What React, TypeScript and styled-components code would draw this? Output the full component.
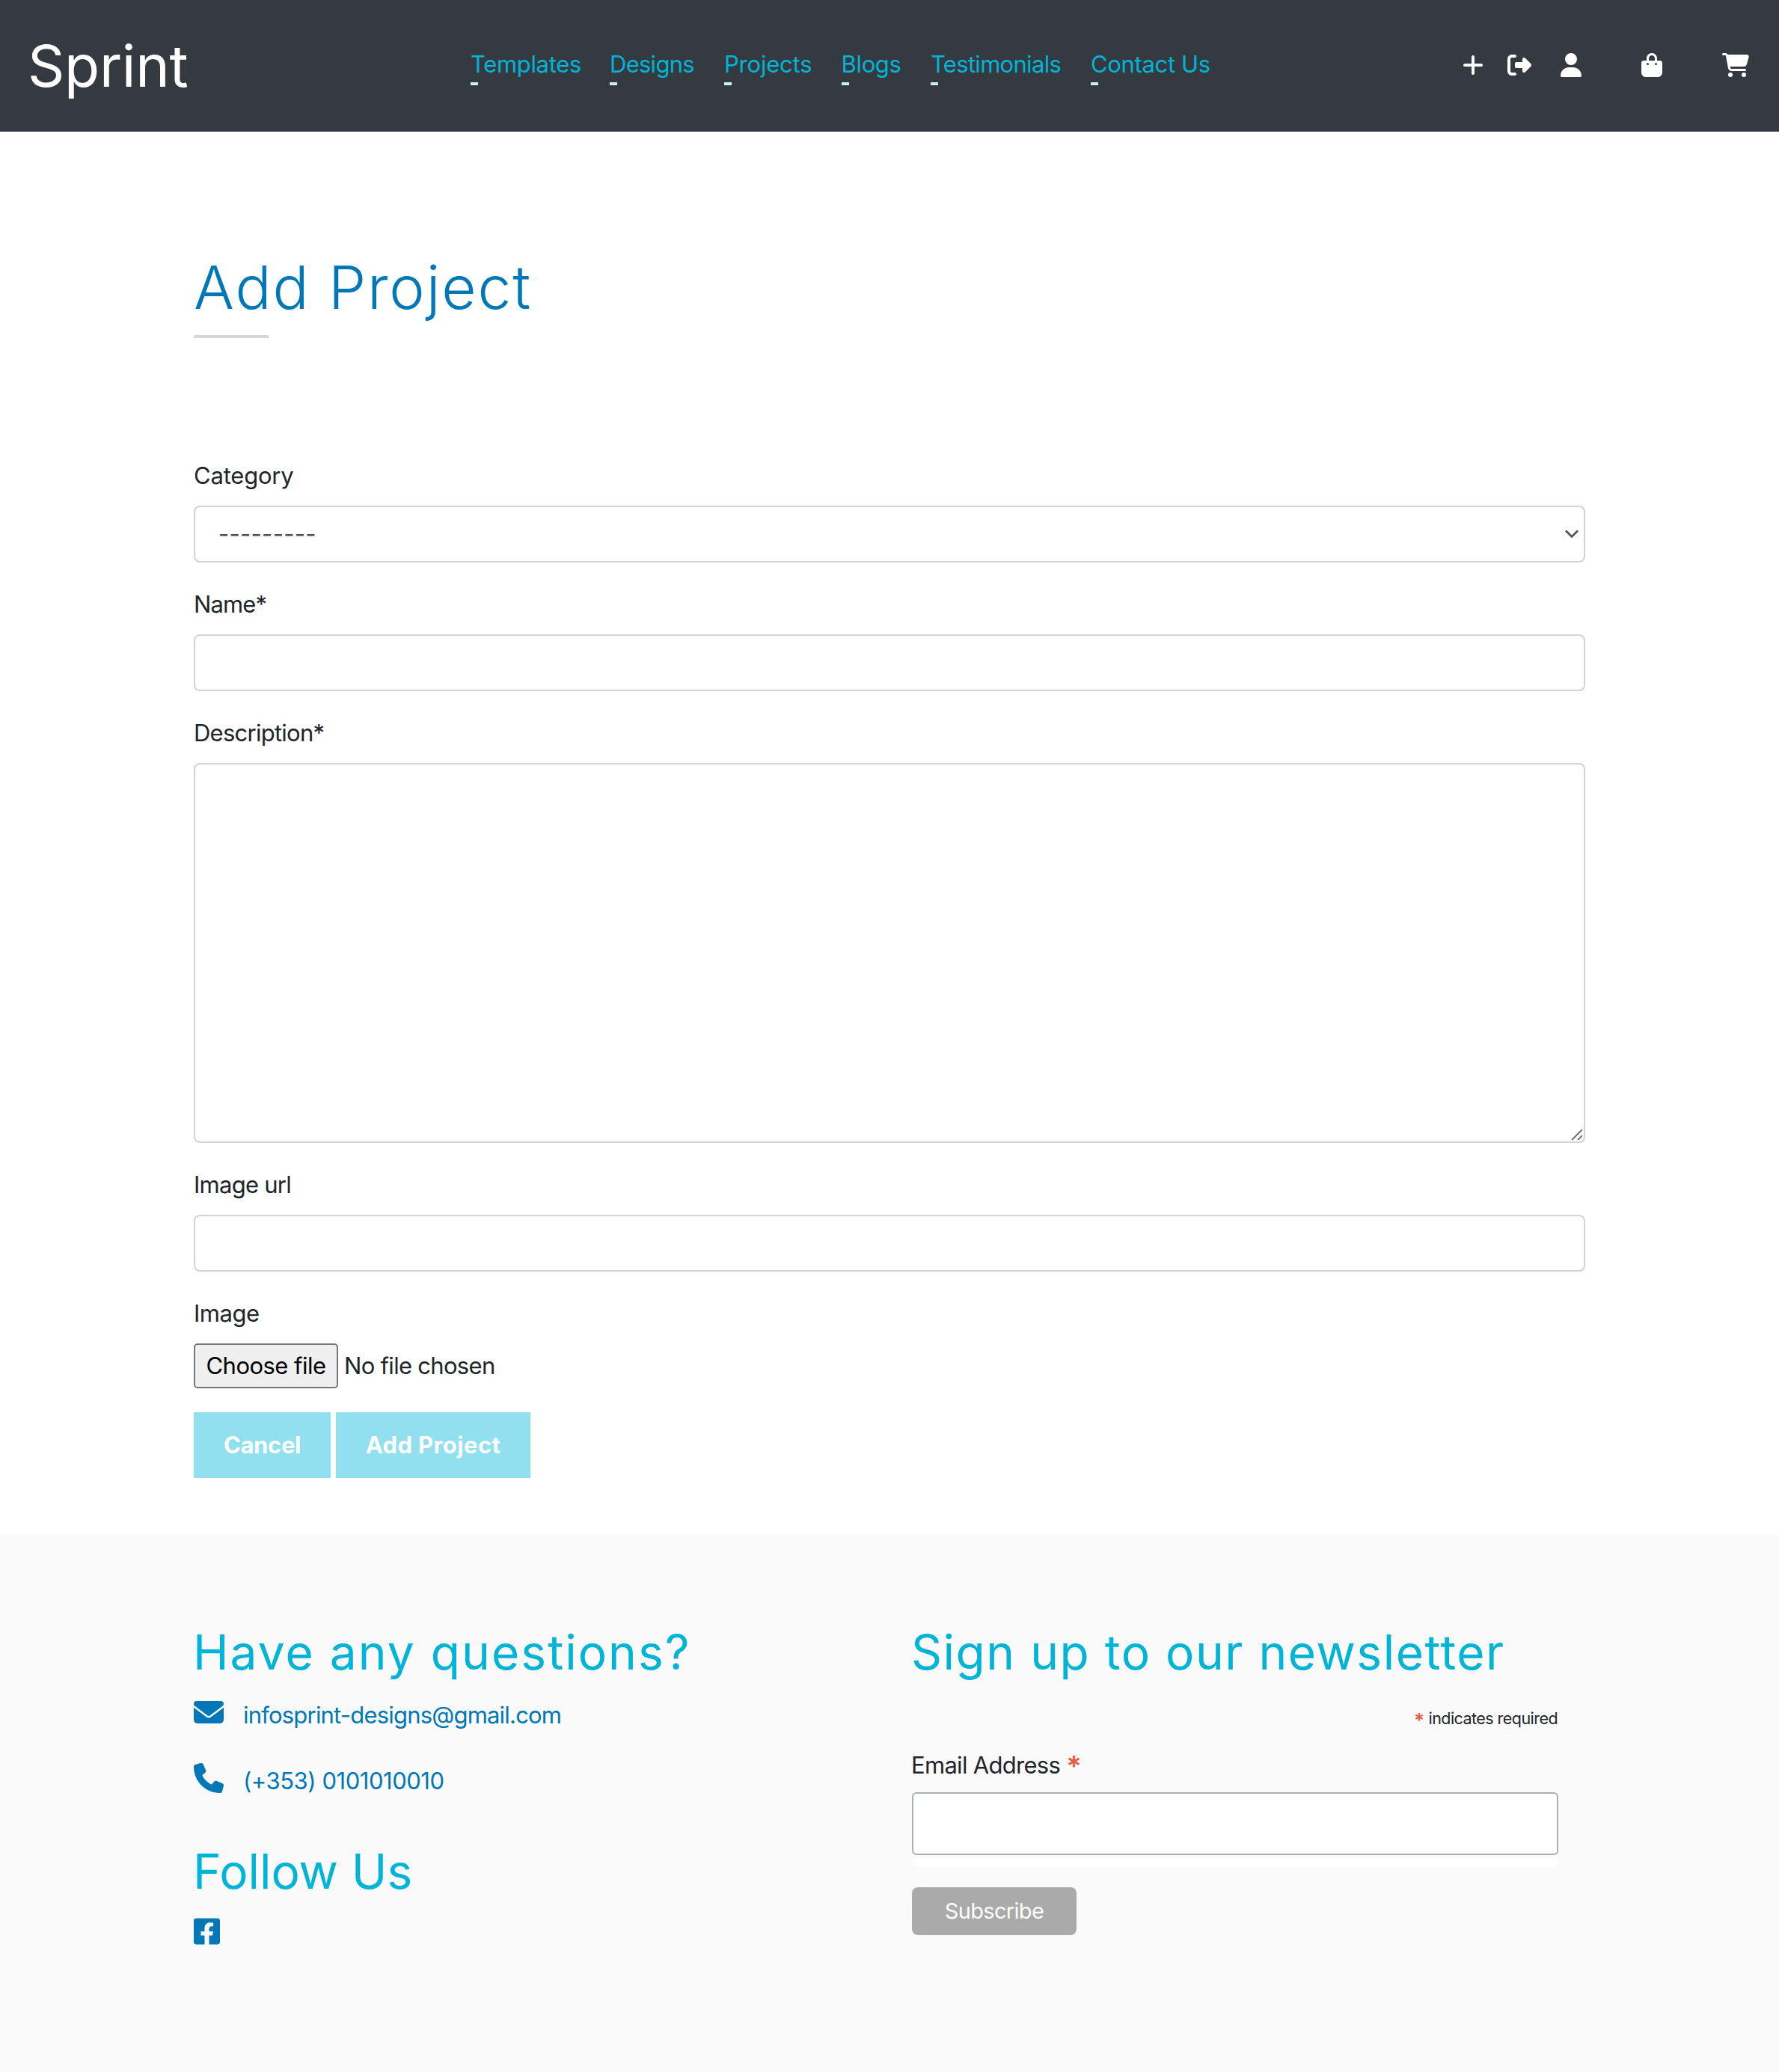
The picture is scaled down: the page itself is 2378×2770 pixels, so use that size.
import React from "react";
import styled, { createGlobalStyle } from "styled-components";
import {
  FaPlus,
  FaRightFromBracket,
  FaUser,
  FaBagShopping,
  FaCartShopping,
  FaEnvelope,
  FaPhone,
} from "react-icons/fa6";
import { FaFacebookSquare } from "react-icons/fa";

const GlobalStyle = createGlobalStyle`
  *, *::before, *::after { box-sizing: border-box; }
  body {
    margin: 0;
    background: #fff;
    color: #212529;
    font-family: Inter, "Liberation Sans", sans-serif;
    font-size: 31px;
    line-height: 48px;
    font-kerning: normal;
  }
`;

const Text = styled.span<{ $ls?: number }>`
  letter-spacing: ${(p) => p.$ls ?? 0}px;
  white-space: nowrap;
`;

/* Header */

const Header = styled.header`
  display: flex;
  align-items: center;
  height: 176px;
  padding: 0 40px 0 37px;
  background: #343a40;
`;

const Brand = styled.a`
  flex: 0 0 592px;
  color: #fff;
  font-size: 77px;
  line-height: 96px;
  letter-spacing: -0.3px;
`;

const Nav = styled.nav`
  display: grid;
  grid-template-columns: 146px 113px 116.6px 79.4px 174px 160px;
  column-gap: 40px;
  margin-top: -4px;
`;

const NavLink = styled.a<{ $ls: number }>`
  position: relative;
  color: #00b4d8;
  letter-spacing: ${(p) => p.$ls}px;
  white-space: nowrap;

  &::after {
    content: "";
    position: absolute;
    left: 0;
    top: 48px;
    width: 10px;
    height: 4px;
    background: #caf0f8;
  }
`;

const Tools = styled.div`
  display: flex;
  align-items: center;
  margin-left: auto;
  margin-top: -2px;
  color: #fff;
`;

const Tool = styled.a<{ $w: number; $gap?: number }>`
  display: block;
  width: ${(p) => p.$w}px;
  height: 32px;
  margin-left: ${(p) => p.$gap ?? 0}px;

  svg {
    display: block;
    width: 100%;
    height: 100%;
  }
`;

/* Project form */

const Main = styled.main`
  width: 1860px;
  margin-left: 259px;
  padding: 160px 0 76px;
`;

const Title = styled.h1`
  margin: 0 0 160px;
  color: #0077b6;
  font-size: 80px;
  font-weight: 340;
  line-height: 96px;
  letter-spacing: 1.9px;

  &::after {
    content: "";
    display: block;
    width: 100px;
    height: 4px;
    margin-top: 16px;
    background: #d6d6d6;
  }
`;

const Field = styled.div`
  position: relative;
  margin-bottom: 32px;
`;

const Label = styled.label<{ $ls: number }>`
  display: block;
  margin-bottom: 16px;
  letter-spacing: ${(p) => p.$ls}px;
`;

const Input = styled.input`
  display: block;
  width: 100%;
  height: 76px;
  padding: 12px 24px;
  border: 2px solid #ced4da;
  border-radius: 8px;
  background: #fff;
  font: inherit;
  outline: none;
`;

const Select = styled.div`
  display: flex;
  align-items: center;
  justify-content: space-between;
  height: 76px;
  padding: 0 6px 0 31px;
  border: 2px solid #ced4da;
  border-radius: 8px;
  color: #495057;
`;

const TextArea = styled.textarea`
  display: block;
  width: 100%;
  height: 508px;
  border: 2px solid #ced4da;
  border-radius: 8px;
  background: #fff;
  font: inherit;
  resize: none;
  outline: none;
`;

const Grip = styled.svg`
  position: absolute;
  right: 3px;
  bottom: 3px;
`;

const FileRow = styled.div`
  display: flex;
  align-items: center;
  gap: 8px;
  height: 60px;
`;

const FileButton = styled.button`
  width: 193px;
  height: 60px;
  padding: 0;
  border: 2px solid #767676;
  border-radius: 5px;
  background: #efefef;
  color: #000;
  font: inherit;
  letter-spacing: -0.53px;
  white-space: nowrap;
`;

const Actions = styled.div`
  display: flex;
  gap: 7px;
`;

const ActionButton = styled.button<{ $w: number; $ls: number }>`
  width: ${(p) => p.$w}px;
  height: 88px;
  padding: 0;
  border: 0;
  background: #90e0ef;
  color: #fff;
  font: inherit;
  font-weight: 700;
  letter-spacing: ${(p) => p.$ls}px;
`;

/* Footer */

const Footer = styled.footer`
  display: flex;
  min-height: 718px;
  padding: 119px 0 0 259px;
  background: #fafafa;
`;

const Contact = styled.section`
  flex: 0 0 960px;
`;

const Newsletter = styled.section`
  display: flex;
  flex-direction: column;
  width: 864px;
`;

const Heading = styled.h2<{ $ls: number; $mt?: number }>`
  margin: ${(p) => p.$mt ?? 0}px 0 0 -1px;
  color: #00b4d8;
  font-size: 64px;
  font-weight: 400;
  line-height: 76px;
  letter-spacing: ${(p) => p.$ls}px;
  white-space: nowrap;
`;

const ContactRow = styled.a<{ $mt: number }>`
  display: flex;
  align-items: flex-end;
  gap: 26px;
  height: 48px;
  margin-top: ${(p) => p.$mt}px;
  color: #0077b6;

  svg {
    display: block;
    width: 40px;
    height: 40px;
    margin-bottom: 8px;
  }
`;

const Social = styled.a`
  display: block;
  margin-top: 22px;
  color: #0077b6;

  svg {
    display: block;
    width: 35px;
    height: 40px;
  }
`;

const Required = styled.div`
  margin: 32px 1px 21px 0;
  font-size: 21.5px;
  line-height: 36px;
  text-align: right;
  letter-spacing: -0.55px;
`;

const Star = styled.span<{ $size: number; $drop: number }>`
  position: relative;
  top: ${(p) => p.$drop}px;
  color: #e85c41;
  font-size: ${(p) => p.$size}px;
  font-weight: 600;
  line-height: 0;
  letter-spacing: 0;
`;

const EmailLabel = styled.label`
  margin: 0 0 12px -1px;
`;

const EmailInput = styled.input`
  width: 100%;
  height: 84px;
  border: 2px solid #abb0b2;
  border-radius: 6px;
  background: #fff;
  outline: none;
`;

const Response = styled.div`
  height: 12px;
  margin: 4px 0 27px;
  border-radius: 6px;
  background: #fff;
`;

const Subscribe = styled.button`
  width: 220px;
  height: 64px;
  padding: 0;
  border: 0;
  border-radius: 8px;
  background: #aaa;
  color: #fff;
  font: inherit;
  font-size: 29px;
  letter-spacing: -0.68px;
`;

const links = [
  { label: "Templates", ls: -0.34 },
  { label: "Designs", ls: -0.73 },
  { label: "Projects", ls: -0.22 },
  { label: "Blogs", ls: -0.37 },
  { label: "Testimonials", ls: -0.7 },
  { label: "Contact Us", ls: -0.34 },
];

export default function App() {
  return (
    <>
      <GlobalStyle />
      <Header>
        <Brand>Sprint</Brand>
        <Nav>
          {links.map((l) => (
            <NavLink key={l.label} $ls={l.ls}>
              {l.label}
            </NavLink>
          ))}
        </Nav>
        <Tools>
          <Tool $w={28}><FaPlus /></Tool>
          <Tool $w={32} $gap={32}><FaRightFromBracket /></Tool>
          <Tool $w={28} $gap={39}><FaUser /></Tool>
          <Tool $w={28} $gap={80}><FaBagShopping /></Tool>
          <Tool $w={36} $gap={80}><FaCartShopping /></Tool>
        </Tools>
      </Header>

      <Main>
        <Title>Add Project</Title>
        <Field>
          <Label $ls={-0.2}>Category</Label>
          <Select>
            <Text $ls={0.27}>---------</Text>
            <svg width="20" height="14" viewBox="0 0 20 14" fill="none">
              <path d="M2 2.5 10 10.5 18 2.5" stroke="#495057" strokeWidth="2.6" />
            </svg>
          </Select>
        </Field>
        <Field>
          <Label $ls={-0.9}>Name*</Label>
          <Input />
        </Field>
        <Field>
          <Label $ls={-0.75}>Description*</Label>
          <TextArea />
          <Grip width="16" height="16" viewBox="0 0 16 16" fill="none">
            <path d="M1 15 15 1M9 15l6-6" stroke="#555" strokeWidth="1.7" />
          </Grip>
        </Field>
        <Field>
          <Label $ls={-0.75}>Image url</Label>
          <Input />
        </Field>
        <Field>
          <Label $ls={-0.5}>Image</Label>
          <FileRow>
            <FileButton>Choose file</FileButton>
            <Text $ls={-0.7}>No file chosen</Text>
          </FileRow>
        </Field>
        <Actions>
          <ActionButton $w={183} $ls={-0.36}>Cancel</ActionButton>
          <ActionButton $w={260} $ls={0.4}>Add Project</ActionButton>
        </Actions>
      </Main>

      <Footer>
        <Contact>
          <Heading $ls={2.05}>Have any questions?</Heading>
          <ContactRow $mt={22}>
            <FaEnvelope />
            <Text $ls={-0.8}>infosprint-designs@gmail.com</Text>
          </ContactRow>
          <ContactRow $mt={40}>
            <FaPhone />
            <Text $ls={-0.46}>(+353) 0101010010</Text>
          </ContactRow>
          <Heading $ls={-0.05} $mt={59}>Follow Us</Heading>
          <Social><FaFacebookSquare /></Social>
        </Contact>
        <Newsletter>
          <Heading $ls={1.52}>Sign up to our newsletter</Heading>
          <Required>
            <Star $size={26} $drop={4}>*</Star> indicates required
          </Required>
          <EmailLabel>
            <Text $ls={-0.7}>Email Address </Text>
            <Star $size={38} $drop={4}>*</Star>
          </EmailLabel>
          <EmailInput />
          <Response />
          <Subscribe>Subscribe</Subscribe>
        </Newsletter>
      </Footer>
    </>
  );
}
